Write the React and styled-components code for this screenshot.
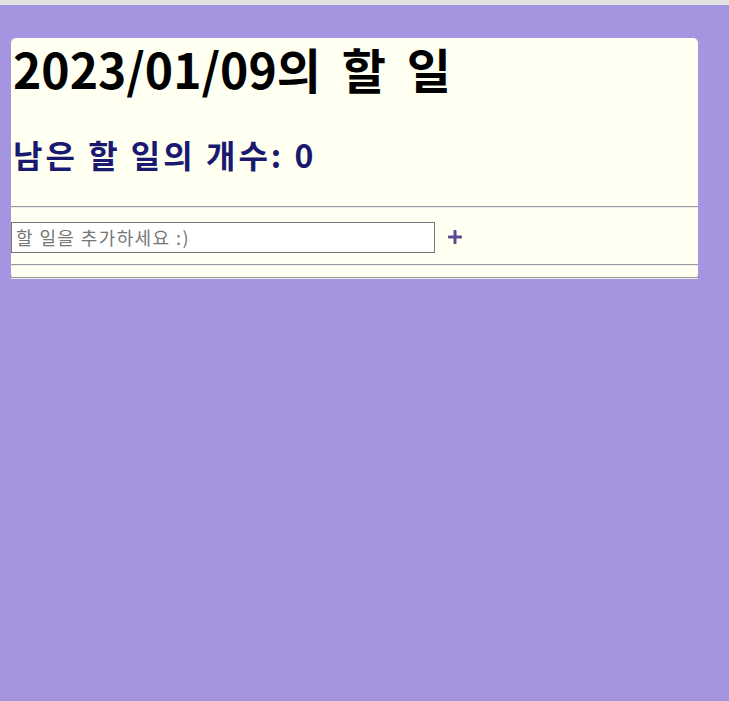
import React from 'react';
import styled, { createGlobalStyle } from 'styled-components';
import { FaPlus } from 'react-icons/fa';

const GlobalStyle = createGlobalStyle`
    html, body {
        margin: 0;
        padding: 0;
        background: #e2e2e2;
    }
    body {
        font-family: "Noto Sans CJK KR", "Noto Sans", sans-serif;
    }
`;

const Page = styled.div`
    margin-top: 5px;
    min-height: 696px;
    background: #a594e0;
    padding: 33px 31px 0 11px;
    box-sizing: border-box;
`;

const Card = styled.div`
    background: #fffff2;
    border-radius: 5px;
    display: flex;
    flex-direction: column;
`;

const Title = styled.h1`
    margin: 0;
    padding: 2px 0 0 2px;
    font-size: 48px;
    font-weight: 700;
    color: #000;
    line-height: 1.2;
    word-spacing: 10px;
`;

const Count = styled.h2`
    margin: 37px 0 0;
    padding-left: 2px;
    font-size: 32px;
    font-weight: 700;
    color: #191970;
    line-height: 1.2;
    letter-spacing: 3px;
`;

const Rule = styled.hr`
    width: 100%;
    margin: ${p => p.$top || 0}px 0 0;
    border: 0;
    border-top: 1px solid #9a9a9a;
    border-bottom: 1px solid #ececec;
    height: 0;
    box-sizing: border-box;
`;

const Form = styled.form`
    display: flex;
    align-items: center;
    gap: 12px;
    margin: 14px 0 11px;
`;

const Input = styled.input`
    width: 424px;
    height: 31px;
    box-sizing: border-box;
    border: 1px solid #767676;
    padding: 0 4px;
    font-family: "Noto Sans CJK KR", "Noto Sans", sans-serif;
    font-size: 18px;
    letter-spacing: 1.4px;
    background: #fff;
    &::placeholder {
        color: #767676;
    }
`;

const AddButton = styled.button`
    border: none;
    background: transparent;
    padding: 0;
    display: flex;
    color: #5a4a94;
    cursor: pointer;
`;

export default function App() {
    return (
        <>
            <GlobalStyle />
            <Page>
                <Card>
                    <Title>2023/01/09의 할 일</Title>
                    <Count>남은 할 일의 개수: 0</Count>
                    <Rule $top={33} />
                    <Form onSubmit={e => e.preventDefault()}>
                        <Input placeholder="할 일을 추가하세요 :)" />
                        <AddButton type="submit">
                            <FaPlus size={16} />
                        </AddButton>
                    </Form>
                    <Rule />
                    <Rule $top={11} />
                </Card>
            </Page>
        </>
    );
}
